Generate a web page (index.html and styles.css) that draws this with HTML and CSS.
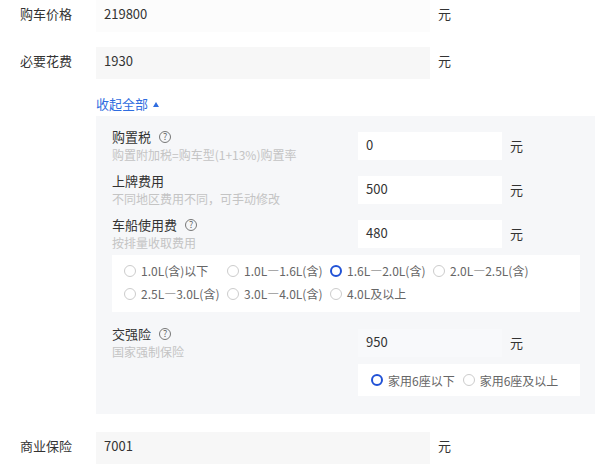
FILE: index.html
```html
<!DOCTYPE html>
<html lang="zh">
<head>
<meta charset="utf-8">
<link rel="stylesheet" href="styles.css">
</head>
<body>
<div class="form">
  <div class="row">
    <div class="label">购车价格</div>
    <div class="input input-white">219800</div>
    <div class="unit">元</div>
  </div>
  <div class="row row-second">
    <div class="label">必要花费</div>
    <div class="input">1930</div>
    <div class="unit">元</div>
  </div>
  <div class="toggle"><span class="toggle-text">收起全部</span><span class="tri"></span></div>
  <div class="panel">
    <div class="prow">
      <div class="plabel">
        <div class="ptitle">购置税<span class="q">?</span></div>
        <div class="psub">购置附加税=购车型(1+13%)购置率</div>
      </div>
      <div class="pinput">0</div>
      <div class="unit">元</div>
    </div>
    <div class="prow">
      <div class="plabel">
        <div class="ptitle">上牌费用</div>
        <div class="psub">不同地区费用不同，可手动修改</div>
      </div>
      <div class="pinput">500</div>
      <div class="unit">元</div>
    </div>
    <div class="prow">
      <div class="plabel">
        <div class="ptitle">车船使用费<span class="q">?</span></div>
        <div class="psub">按排量收取费用</div>
      </div>
      <div class="pinput">480</div>
      <div class="unit">元</div>
    </div>
    <div class="radiobox">
      <div class="rline">
        <span class="ritem"><span class="rc"></span>1.0L(含)以下</span>
        <span class="ritem"><span class="rc"></span>1.0L—1.6L(含)</span>
        <span class="ritem"><span class="rc on"></span>1.6L—2.0L(含)</span>
        <span class="ritem"><span class="rc"></span>2.0L—2.5L(含)</span>
      </div>
      <div class="rline">
        <span class="ritem"><span class="rc"></span>2.5L—3.0L(含)</span>
        <span class="ritem"><span class="rc"></span>3.0L—4.0L(含)</span>
        <span class="ritem"><span class="rc"></span>4.0L及以上</span>
      </div>
    </div>
    <div class="prow prow-jq">
      <div class="plabel">
        <div class="ptitle">交强险<span class="q">?</span></div>
        <div class="psub">国家强制保险</div>
      </div>
      <div class="pinput pinput-gray">950</div>
      <div class="unit">元</div>
    </div>
    <div class="seatbox">
      <span class="sitem"><span class="rc on"></span>家用6座以下</span>
      <span class="sitem"><span class="rc"></span>家用6座及以上</span>
    </div>
  </div>
  <div class="row row-last">
    <div class="label">商业保险</div>
    <div class="input">7001</div>
    <div class="unit">元</div>
  </div>
</div>
</body>
</html>
```

FILE: styles.css
```css
* { box-sizing: border-box; }
body {
  margin: 0;
  background: #fff;
  font-family: "Noto Sans CJK SC", "Noto Sans", sans-serif;
  font-size: 13px;
  color: #333;
}
.form { width: 600px; }
.row {
  display: flex;
  align-items: flex-start;
  height: 32px;
  line-height: 28px;
}
.row-second { margin-top: 15px; }
.row-last { margin-top: 18px; }
.label {
  width: 96px;
  padding-left: 20px;
  color: #333;
}
.input {
  width: 334px;
  height: 32px;
  line-height: 28px;
  padding-left: 8px;
  background: #f7f7f7;
  color: #333;
}
.input-white { background: #fcfcfc; }
.unit {
  margin-left: 8px;
  color: #333;
}
.toggle {
  margin-left: 96px;
  padding-top: 13px;
  height: 37px;
  line-height: 16px;
  display: flex;
  align-items: center;
  color: #2f6de0;
}
.toggle-text { font-size: 13px; }
.tri {
  width: 0;
  height: 0;
  margin-left: 5px;
  border-left: 3px solid transparent;
  border-right: 3px solid transparent;
  border-bottom: 5px solid #2f6de0;
}
.panel {
  margin-left: 96px;
  width: 499px;
  background: #f6f7f9;
  padding: 12px 0 18px 16px;
}
.prow {
  display: flex;
  align-items: center;
  height: 36px;
  margin-bottom: 8px;
}
.prow .unit { margin-bottom: 2px; }
.plabel { width: 246px; }
.ptitle {
  height: 18px;
  line-height: 18px;
  font-size: 13px;
  color: #333;
  display: flex;
  align-items: center;
}
.psub {
  height: 18px;
  line-height: 18px;
  font-size: 12px;
  color: #c4c4c4;
}
.q {
  display: inline-block;
  width: 12px;
  height: 12px;
  margin-left: 8px;
  border: 1px solid #777;
  border-radius: 50%;
  font-size: 9px;
  line-height: 10px;
  text-align: center;
  color: #666;
}
.pinput {
  width: 144px;
  height: 28px;
  line-height: 26px;
  padding-left: 8px;
  background: #fff;
  color: #333;
}
.pinput-gray { background: #f8f9fb; }
.radiobox {
  margin-top: -5px;
  width: 468px;
  background: #fff;
  padding: 4px 12px 7px;
}
.rline {
  display: flex;
  height: 23px;
  align-items: center;
}
.ritem, .sitem {
  display: flex;
  align-items: center;
  font-size: 12px;
  color: #666;
}
.ritem { width: 103px; flex: none; }
.rc {
  width: 12px;
  height: 12px;
  border-radius: 50%;
  border: 1px solid #ccc;
  margin-right: 5px;
  flex: none;
  background: #fff;
}
.rc.on { border: 2.5px solid #2152d6; }
.prow-jq { margin-top: 13px; margin-bottom: 0; }
.seatbox {
  margin-left: 246px;
  margin-top: 3px;
  width: 222px;
  height: 32px;
  background: #fff;
  display: flex;
  align-items: center;
  padding-left: 13px;
}
.sitem { margin-right: 8px; }
```
